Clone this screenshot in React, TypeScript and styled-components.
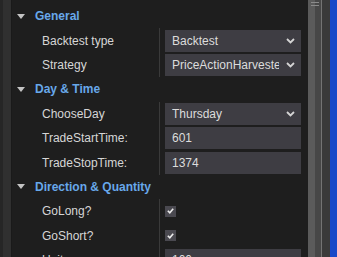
import React from "react";
import styled, { createGlobalStyle } from "styled-components";

const GlobalStyle = createGlobalStyle`
  html, body {
    margin: 0;
    padding: 0;
    background: #1e1e1e;
    overflow: hidden;
  }
  body {
    font-family: "Liberation Sans", Arial, sans-serif;
    font-size: 12px;
  }
`;

const Frame = styled.div`
  display: flex;
  width: 337px;
  height: 257px;
  overflow: hidden;
`;

const EdgeStrip = styled.div<{ $w: number; $bg: string }>`
  flex: 0 0 ${(p) => p.$w}px;
  background: ${(p) => p.$bg};
`;

const Panel = styled.div`
  flex: 0 0 296px;
  background: #1e1e1e;
  padding-top: 4px;
  overflow: hidden;
`;

const Scrollbar = styled.div`
  flex: 0 0 22px;
  display: flex;
`;

const ScrollThumb = styled.div`
  flex: 0 0 7px;
  background: #5b5b5b;
  position: relative;
`;

const Grip = styled.div`
  position: absolute;
  left: 3px;
  width: 8px;
  height: 1px;
  background: #8a8a8a;
`;

const Group = styled.div``;

const HeaderRow = styled.div`
  display: flex;
  align-items: center;
  height: 24.4px;
  padding-left: 5px;
`;

const Caret = styled.span`
  width: 0;
  height: 0;
  border-left: 4.5px solid transparent;
  border-right: 4.5px solid transparent;
  border-top: 5px solid #c4c4c4;
  margin-right: 10px;
`;

const HeaderText = styled.span`
  color: #68a8ea;
  font-weight: bold;
  font-size: 12px;
`;

const Row = styled.div`
  display: grid;
  grid-template-columns: 147px 1fr;
  height: 24.4px;
`;

const Label = styled.div`
  display: flex;
  align-items: center;
  padding-left: 30px;
  color: #d6d6d6;
  white-space: nowrap;
  overflow: hidden;
`;

const ValueCell = styled.div`
  display: flex;
  align-items: center;
  border-left: 1px solid #3a3a3a;
  padding-left: 5px;
`;

const Field = styled.div`
  display: flex;
  align-items: center;
  width: 136px;
  height: 22px;
  background: #3e3d43;
  color: #dcdcdc;
  padding-left: 7px;
  box-sizing: border-box;
  overflow: hidden;
`;

const FieldText = styled.span`
  flex: 1;
  white-space: nowrap;
  overflow: hidden;
`;

const ChevronBox = styled.span`
  flex: 0 0 22px;
  display: flex;
  justify-content: center;
  align-items: center;
  background: #3e3d43;
`;

const CheckBox = styled.span`
  display: flex;
  justify-content: center;
  align-items: center;
  width: 11px;
  height: 11px;
  background: #4a4950;
`;

const Chevron = () => (
  <svg width="9" height="6" viewBox="0 0 9 6">
    <path d="M1 1 L4.5 4.5 L8 1" stroke="#d4d4d4" strokeWidth="1.8" fill="none" />
  </svg>
);

const Check = () => (
  <svg width="7" height="6" viewBox="0 0 7 6">
    <path d="M0.8 2.8 L2.8 4.8 L6.2 0.8" stroke="#ececec" strokeWidth="1.6" fill="none" />
  </svg>
);

type Prop =
  | { label: string; kind: "select"; value: string }
  | { label: string; kind: "text"; value: string }
  | { label: string; kind: "check" };

type Section = { title: string; props: Prop[] };

const sections: Section[] = [
  {
    title: "General",
    props: [
      { label: "Backtest type", kind: "select", value: "Backtest" },
      { label: "Strategy", kind: "select", value: "PriceActionHarvester" },
    ],
  },
  {
    title: "Day & Time",
    props: [
      { label: "ChooseDay", kind: "select", value: "Thursday" },
      { label: "TradeStartTime:", kind: "text", value: "601" },
      { label: "TradeStopTime:", kind: "text", value: "1374" },
    ],
  },
  {
    title: "Direction & Quantity",
    props: [
      { label: "GoLong?", kind: "check" },
      { label: "GoShort?", kind: "check" },
      { label: "Unit", kind: "text", value: "100" },
    ],
  },
];

const PropValue = ({ prop }: { prop: Prop }) => {
  if (prop.kind === "check") {
    return (
      <CheckBox>
        <Check />
      </CheckBox>
    );
  }
  return (
    <Field>
      <FieldText>{prop.value}</FieldText>
      {prop.kind === "select" && (
        <ChevronBox>
          <Chevron />
        </ChevronBox>
      )}
    </Field>
  );
};

export default function App() {
  return (
    <>
      <GlobalStyle />
      <Frame>
        <EdgeStrip $w={3} $bg="#262626" />
        <EdgeStrip $w={8} $bg="#303030" />
        <EdgeStrip $w={1} $bg="#1a1a1a" />
        <Panel>
          {sections.map((s) => (
            <Group key={s.title}>
              <HeaderRow>
                <Caret />
                <HeaderText>{s.title}</HeaderText>
              </HeaderRow>
              {s.props.map((p) => (
                <Row key={p.label}>
                  <Label>{p.label}</Label>
                  <ValueCell>
                    <PropValue prop={p} />
                  </ValueCell>
                </Row>
              ))}
            </Group>
          ))}
        </Panel>
        <Scrollbar>
          <ScrollThumb>
            <Grip style={{ top: 2 }} />
            <Grip style={{ top: 5 }} />
          </ScrollThumb>
          <EdgeStrip $w={6} $bg="#474747" />
          <EdgeStrip $w={1} $bg="#747474" />
          <EdgeStrip $w={8} $bg="#3a3a3a" />
        </Scrollbar>
        <EdgeStrip $w={7} $bg="#1848c8" />
      </Frame>
    </>
  );
}
